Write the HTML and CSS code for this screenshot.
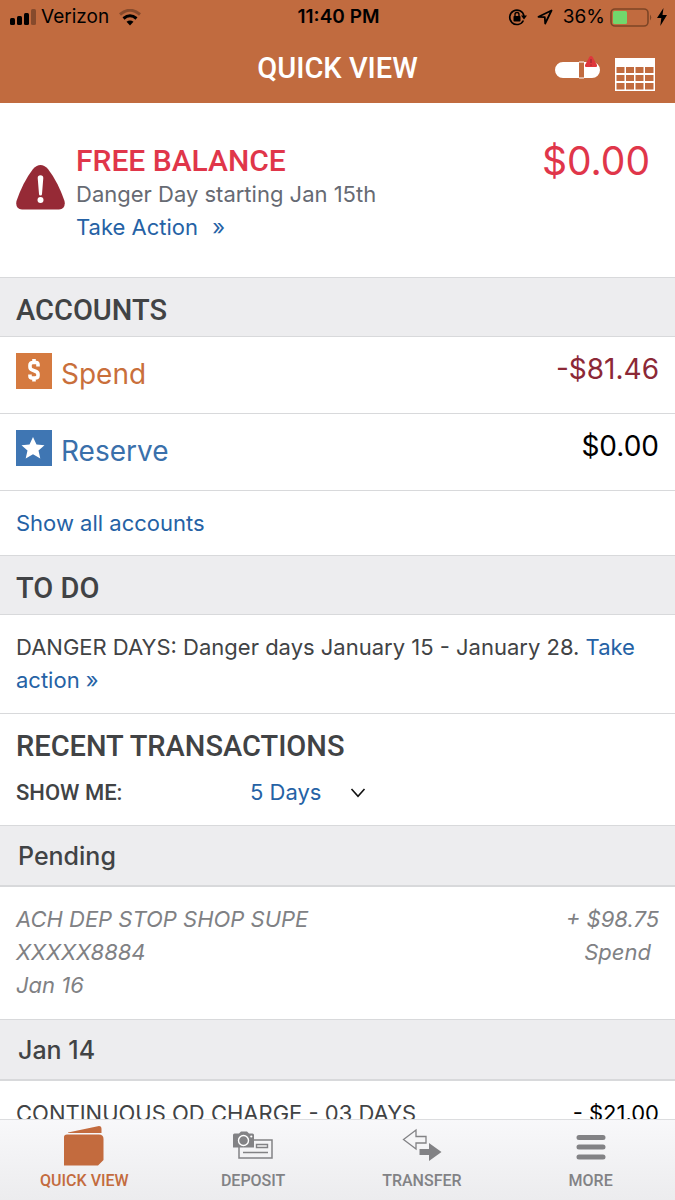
FILE: index.html
```html
<!DOCTYPE html>
<html lang="en">
<head>
<meta charset="utf-8">
<meta name="viewport" content="width=device-width, initial-scale=1">
<title>Quick View</title>
<link rel="stylesheet" href="styles.css">
</head>
<body>
<div class="app">
  <header class="header">
    <div class="status">
      <div class="status-left">
        <svg class="signal" width="27" height="17" viewBox="0 0 27 17" aria-hidden="true">
          <rect x="0" y="9" width="5" height="7" rx="1.5"/><rect x="7" y="7" width="5" height="9" rx="1.5"/><rect x="14" y="4" width="5" height="12" rx="1.5"/><rect x="21" y="0" width="5" height="16" rx="1.5" opacity=".3"/>
        </svg>
        <span>Verizon</span>
        <svg class="wifi" width="22" height="17" viewBox="0 0 22 17" aria-hidden="true">
          <path d="M1 5.500Q11-3 21 5.500" fill="none" stroke="#000" stroke-width="3" opacity=".3"/>
          <path d="M4.500 9.500Q11 4 17.500 9.500" fill="none" stroke="#000" stroke-width="3"/>
          <path d="M7.500 12.800Q11 10 14.500 12.800L11 16.500Z"/>
        </svg>
      </div>
      <strong class="clock">11:40 PM</strong>
      <div class="status-right">
        <svg width="19" height="18" viewBox="0 0 19 18" aria-hidden="true">
          <path d="M15.400 12.500A7.200 7.200 0 1 1 16 8" fill="none" stroke="#000" stroke-width="1.600"/>
          <path d="M13 7.500H19L16 11.500Z"/><rect x="5.500" y="8" width="7" height="5.500" rx=".8"/>
          <path d="M7 8V6.500a2 2 0 0 1 4 0V8" fill="none" stroke="#000" stroke-width="1.400"/>
        </svg>
        <svg class="locate" width="16" height="16" viewBox="0 0 16 16" aria-hidden="true"><path d="M1.500 7.800L14.500 1.500L8.200 14.500L7.800 8.200Z" fill="none" stroke="#000" stroke-width="1.800" stroke-linejoin="round"/></svg>
        <span>36%</span>
        <svg class="battery" width="42" height="19" viewBox="0 0 42 19" aria-hidden="true">
          <rect x="1" y="1" width="37" height="17" rx="4" fill="none" stroke="#7d4526" stroke-width="1.600"/>
          <rect x="3" y="3" width="14" height="13" rx="1.500" fill="#71d86c"/><path d="M40 6.500q2.500 3 0 6z" fill="#7d4526"/>
        </svg>
        <svg width="10" height="18" viewBox="0 0 10 18" aria-hidden="true"><path d="M6.500 0L0 10H4.300L3.300 18L10 7H5.500Z"/></svg>
      </div>
    </div>
    <div class="navbar">
      <h1 class="title">QUICK VIEW</h1>
      <div class="tools">
        <button class="tool" aria-label="Spending meter">
          <svg width="45" height="26" viewBox="0 0 45 26"><path d="M8 6H24V22H8A8 8 0 0 1 8 6ZM29 6H37A8 8 0 0 1 37 22H29Z" fill="#fff"/><path d="M24 6H29M24 22H29" stroke="#fff" stroke-width="1"/><path d="M36 0Q37 0 37.600 1L42 9Q42.500 11 41 11H31Q29.500 11 30 9L34.400 1Q35 0 36 0Z" fill="#df373c"/><path d="M36 3V7M36 8.500V9.700" stroke="#9e2830" stroke-width="1.200"/></svg>
        </button>
        <button class="tool" aria-label="Calendar">
          <svg width="40" height="33" viewBox="0 0 40 33"><path d="M0 0H40V33H0ZM1.500 9V15H9.500V9ZM11 9V15H19V9ZM20.500 9V15H28.500V9ZM30 9V15H38.500V9ZM1.500 17V23H9.500V17ZM11 17V23H19V17ZM20.500 17V23H28.500V17ZM30 17V23H38.500V17ZM1.500 25V31.500H9.500V25ZM11 25V31.500H19V25ZM20.500 25V31.500H28.500V25ZM30 25V31.500H38.500V25Z" fill="#fff" fill-rule="evenodd"/></svg>
        </button>
      </div>
    </div>
  </header>

  <main class="content">
    <section class="alert">
      <svg class="alert-icon" width="49" height="45" viewBox="0 0 49 45" aria-hidden="true">
        <path d="M17 4Q24.500-4 32 4Q42 17 48.500 36Q50 44 43 44.500H6Q-1 44 .5 36Q7 17 17 4Z" fill="#962a36"/>
        <path d="M21.700 13a2.800 2.800 0 0 1 5.600 0L26 29a1.500 1.500 0 0 1-3 0Z" fill="#fff"/><circle cx="24.500" cy="35" r="3" fill="#fff"/>
      </svg>
      <div class="alert-body">
        <h2 class="alert-title">FREE BALANCE</h2>
        <p class="alert-text">Danger Day starting Jan 15th</p>
        <a class="alert-link" href="#action">Take Action <span class="chev">»</span></a>
      </div>
      <p class="alert-amount">$0.00</p>
    </section>

    <h2 class="band heading">ACCOUNTS</h2>
    <a class="account" href="#spend">
      <svg class="account-icon" width="36" height="36" viewBox="0 0 36 36" aria-hidden="true"><rect width="36" height="36" fill="#d57a40"/><path d="M22 13.500V11.500Q22 9.500 20 9.500H17Q14 9.500 14 12V14Q14 16 16 16.800L20 18.500Q22 19.300 22 21.500V22.500Q22 25 19 25H16Q14 25 14 23V21.500M18 6V10M18 25V28.500" fill="none" stroke="#fff" stroke-width="3.600"/></svg>
      <span class="account-name spend">Spend</span>
      <span class="account-amount negative">-$81.46</span>
    </a>
    <a class="account" href="#reserve">
      <svg class="account-icon" width="36" height="36" viewBox="0 0 36 36" aria-hidden="true"><rect width="36" height="36" fill="#3f76b3"/><path d="M17 7L20.500 14.500L28.500 15.300L22.500 20.500L24.300 28.500L17 24.300L9.700 28.500L11.500 20.500L5.500 15.300L13.500 14.500Z" fill="#fff"/></svg>
      <span class="account-name reserve">Reserve</span>
      <span class="account-amount">$0.00</span>
    </a>
    <div class="show-all"><a href="#accounts">Show all accounts</a></div>

    <h2 class="band heading">TO DO</h2>
    <p class="todo">DANGER DAYS: Danger days January 15 - January 28. <a href="#todo">Take action »</a></p>

    <section class="recent">
      <h2 class="heading">RECENT TRANSACTIONS</h2>
      <div class="filter">
        <label class="filter-label" for="range">SHOW ME:</label>
        <div class="picker">
          <select class="picker-select" id="range"><option>5 Days</option></select>
          <svg class="picker-arrow" width="16" height="10" viewBox="0 0 16 10" aria-hidden="true"><path d="M1.500 1L8 8.300L14.500 1" fill="none" stroke="#111" stroke-width="1.600"/></svg>
        </div>
      </div>
    </section>

    <h3 class="band group">Pending</h3>
    <article class="transaction pending">
      <div><p>ACH DEP STOP SHOP SUPE</p><p>XXXXX8884</p><p>Jan 16</p></div>
      <div class="transaction-side"><p>+ $98.75</p><p class="source">Spend</p></div>
    </article>
    <h3 class="band group">Jan 14</h3>
    <article class="transaction">
      <div><p>CONTINUOUS OD CHARGE - 03 DAYS</p></div>
      <div class="transaction-side"><p>- $21.00</p></div>
    </article>
  </main>

  <nav class="tabs">
    <a class="tab active" href="#quick">
      <svg class="tab-icon" width="40" height="40" viewBox="0 0 40 40" aria-hidden="true"><path d="M4 6.500L35 0Q37.500 0 37.500 3V7H4ZM0 11Q0 8.500 3 8.500H35Q39.500 8.500 39.500 13V34L34 39.500H0Z" fill="#c36b3e"/></svg>
      QUICK VIEW
    </a>
    <a class="tab" href="#deposit">
      <svg class="tab-icon" width="40" height="40" viewBox="0 0 40 40" aria-hidden="true"><path d="M21 14H39V32H6V21" fill="none" stroke="#828285" stroke-width="1.500"/><path d="M1.500 7.500H6L8 5.500H14L16 7.500H19.500Q21 7.500 21 9V21.500H0V9Q0 7.500 1.500 7.500Z" fill="#828285"/><circle cx="10.500" cy="14.500" r="5" fill="none" stroke="#fff" stroke-width="1.400"/><circle cx="18.300" cy="10.500" r="1.100" fill="#fff"/><path d="M23.500 18.500H34.500V21.500H23.500ZM10 26.500H35" fill="none" stroke="#828285" stroke-width="1.400"/></svg>
      DEPOSIT
    </a>
    <a class="tab" href="#transfer">
      <svg class="tab-icon" width="40" height="40" viewBox="0 0 40 40" aria-hidden="true"><path d="M1.500 13.500L14 4V10.500H24V17H14V23Z" fill="none" stroke="#828285" stroke-width="1.300"/><path d="M17.500 23H27V17L39.500 26L27 35V29H17.500Z" fill="#828285"/></svg>
      TRANSFER
    </a>
    <a class="tab" href="#more">
      <svg class="tab-icon" width="40" height="40" viewBox="0 0 40 40" aria-hidden="true"><path d="M8 11.500H32M8 21H32M8 31H32" stroke="#828285" stroke-width="5" stroke-linecap="round"/></svg>
      MORE
    </a>
  </nav>
</div>
</body>
</html>
```
FILE: styles.css
```css
* { box-sizing: border-box; }
body, h1, h2, h3, p { margin: 0; font-weight: 400; }
body { font-family: Inter, "Liberation Sans", sans-serif; font-size: 22px; line-height: 33px; color: #414345; background: #fff; }
svg { display: block; flex: none; }
a { color: #2562a5; text-decoration: none; }
button { border: 0; padding: 0; background: none; }

.app { height: 100vh; display: flex; flex-direction: column; }
.header { background: #c16b3f; }
.status { display: grid; grid-template-columns: 1fr auto 1fr; align-items: center; height: 34px; padding: 0 8px 0 10px; font-size: 19px; line-height: 34px; color: #000; }
.status-left, .status-right { display: flex; align-items: center; }
.status-left { gap: 4px; }
.wifi { margin-left: 6px; }
.clock { font-weight: 600; }
.status-right { justify-content: flex-end; gap: 5px; }
.locate { margin: 0 5px; }
.navbar { display: grid; grid-template-columns: 1fr auto 1fr; align-items: center; height: 69px; padding: 0 20px; }
.title { grid-column: 2; font-family: Roboto, sans-serif; font-size: 29px; font-weight: 500; line-height: 69px; color: #fff; }
.tools { display: flex; align-items: center; justify-content: flex-end; gap: 15px; padding-top: 12px; }
.tool:first-child { padding-bottom: 12px; }

.content { flex: 1; min-height: 0; overflow-y: auto; scrollbar-width: none; }
.alert { display: flex; padding: 41px 25px 33px 16px; }
.alert-icon { margin-top: 21px; }
.alert-body { flex: 1; padding-left: 11px; }
.alert-title { margin-bottom: 1px; font-family: Roboto, sans-serif; font-size: 30px; font-weight: 500; color: #e0364a; }
.alert-text { color: #666a73; }
.alert-link { display: block; }
.chev { margin-left: 8px; }
.alert-amount { font-size: 39px; color: #e0364a; }

.band { background: #ededef; border-top: 1px solid #d8d9db; border-bottom: 1px solid #d8d9db; }
.heading { font-family: Roboto, sans-serif; font-size: 29px; font-weight: 500; line-height: 33px; }
.band.heading { padding: 16px 16px 9px; }
.account { display: flex; align-items: flex-start; padding: 16px; border-bottom: 1px solid #d8d9db; height: 77px; }
.account-name { flex: 1; padding: 5px 0 0 9px; font-size: 28px; }
.spend { color: #c96f3b; }
.reserve { color: #3a70ab; }
.account-amount { font-size: 28px; color: #000; }
.account-amount.negative { color: #8c2836; }
.show-all { padding: 16px 16px 15px; }
.todo { padding: 16px; border-bottom: 1px solid #d8d9db; }
.recent { padding: 16px; }
.filter { display: grid; grid-template-columns: 234px 1fr; align-items: center; padding-top: 13px; }
.filter-label { font-family: Roboto, sans-serif; font-size: 22px; font-weight: 500; }
.picker { display: inline-grid; justify-content: start; align-items: center; }
.picker-select { grid-area: 1 / 1; appearance: none; border: 0; margin: 0; padding: 0 44px 0 0; background: none; font: inherit; color: #2562a5; }
.picker-arrow { grid-area: 1 / 1; justify-self: end; pointer-events: none; }
.band.group { padding: 14px 18px 12px; border-bottom-width: 2px; font-size: 25px; font-weight: 500; }
.transaction { display: flex; justify-content: space-between; padding: 16px 16px 17px; }
.transaction-side { text-align: right; color: #000; }
.pending, .pending .transaction-side { font-style: italic; color: #808184; }
.source { padding-right: 8px; }

.tabs { display: grid; grid-template-columns: repeat(4, 1fr); border-top: 1px solid #dcdddf; background: linear-gradient(#f8f8fa, #ececee); }
.tab { display: flex; flex-direction: column; align-items: center; gap: 6px; padding: 6px 0 10px; font-family: Roboto, sans-serif; font-size: 16px; font-weight: 500; line-height: 18px; color: #828285; }
.tab.active { color: #c36b3e; }
```
